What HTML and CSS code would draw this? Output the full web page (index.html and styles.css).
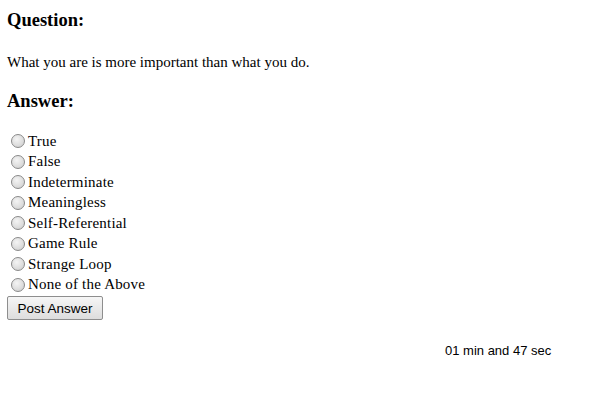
FILE: index.html
```html
<!DOCTYPE html>
<html>
<head>
<meta charset="utf-8">
<link rel="stylesheet" href="styles.css">
</head>
<body>
<h3 class="heading">Question:</h3>
<p class="question">What you are is more important than what you do.</p>
<h3 class="heading answer-heading">Answer:</h3>
<form class="answers">
  <label class="option"><span class="radio"></span>True</label>
  <label class="option"><span class="radio"></span>False</label>
  <label class="option"><span class="radio"></span>Indeterminate</label>
  <label class="option"><span class="radio"></span>Meaningless</label>
  <label class="option"><span class="radio"></span>Self-Referential</label>
  <label class="option"><span class="radio"></span>Game Rule</label>
  <label class="option"><span class="radio"></span>Strange Loop</label>
  <label class="option"><span class="radio"></span>None of the Above</label>
  <button type="button" class="post">Post Answer</button>
</form>
<div class="timer">01 min and 47 sec</div>
</body>
</html>
```
FILE: styles.css
```css
html, body {
  margin: 0;
  padding: 0;
  background: #fff;
}
body {
  padding: 9px 7px;
  font-family: "Liberation Serif", "Times New Roman", serif;
  font-size: 15px;
  color: #000;
}
.heading {
  margin: 0;
  font-size: 18.5px;
  font-weight: bold;
  line-height: 22px;
}
.question {
  margin: 21px 0 0 0;
  font-size: 15px;
  line-height: 20px;
}
.answer-heading {
  margin-top: 18px;
}
.answers {
  margin: 19px 0 0 0;
  display: flex;
  flex-direction: column;
  align-items: flex-start;
}
.option {
  display: flex;
  align-items: center;
  height: 20.5px;
  font-size: 15px;
  letter-spacing: 0.2px;
}
.radio {
  width: 12px;
  height: 12px;
  border-radius: 50%;
  border: 1px solid #8a8a8a;
  background: radial-gradient(circle at 40% 35%, #f4f4f4 0%, #dcdcdc 60%, #c8c8c8 100%);
  margin: 0 3px 0 4px;
  box-sizing: content-box;
}
.post {
  margin-top: 1px;
  width: 96px;
  height: 24px;
  padding: 0;
  font-family: "Liberation Sans", Arial, sans-serif;
  font-size: 13.5px;
  color: #000;
  border: 1px solid #8e8e8e;
  border-radius: 2px;
  background: linear-gradient(#f6f6f6, #dddddd);
}
.timer {
  margin: 23px 0 0 438px;
  font-family: "Liberation Sans", Arial, sans-serif;
  font-size: 13px;
  line-height: 16px;
}
```
